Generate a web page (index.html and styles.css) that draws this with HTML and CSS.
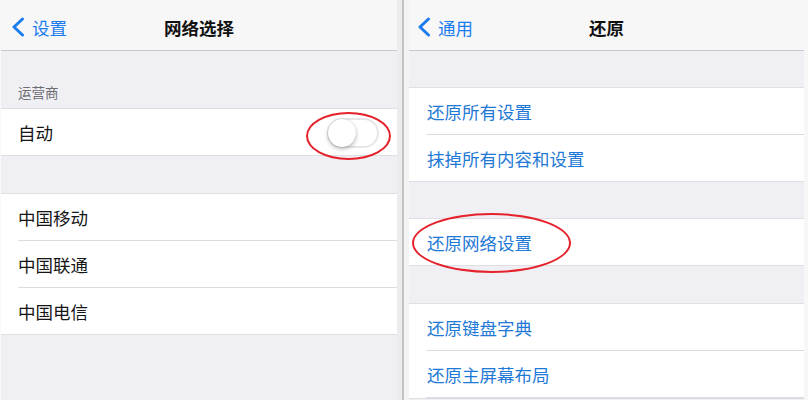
FILE: index.html
```html
<!DOCTYPE html>
<html lang="zh">
<head>
<meta charset="utf-8">
<link rel="stylesheet" href="styles.css">
</head>
<body>
<div class="screen">
  <section class="panel left">
    <header class="nav">
      <div class="back">
        <svg class="chev" width="14" height="20" viewBox="0 0 14 20"><polyline points="11.5,2 3,10 11.5,18" fill="none" stroke="#1b7cf0" stroke-width="3" stroke-linecap="round" stroke-linejoin="round"/></svg>
        <span>设置</span>
      </div>
      <div class="title">网络选择</div>
      <div></div>
    </header>
    <div class="sec-head">运营商</div>
    <div class="group">
      <div class="row">
        <span>自动</span>
        <span class="switch"><span class="knob"></span></span>
      </div>
    </div>
    <div class="gap g37"></div>
    <div class="group">
      <div class="row sep">中国移动</div>
      <div class="row sep">中国联通</div>
      <div class="row">中国电信</div>
    </div>
    <span class="ring ring-a"></span>
  </section>
  <div class="divider"></div>
  <section class="panel right">
    <header class="nav">
      <div class="back">
        <svg class="chev" width="14" height="20" viewBox="0 0 14 20"><polyline points="11.5,2 3,10 11.5,18" fill="none" stroke="#1b7cf0" stroke-width="3" stroke-linecap="round" stroke-linejoin="round"/></svg>
        <span>通用</span>
      </div>
      <div class="title">还原</div>
      <div></div>
    </header>
    <div class="gap g36"></div>
    <div class="group">
      <div class="row sep link">还原所有设置</div>
      <div class="row link">抹掉所有内容和设置</div>
    </div>
    <div class="gap g36"></div>
    <div class="group">
      <div class="row link">还原网络设置</div>
    </div>
    <div class="gap g37"></div>
    <div class="group">
      <div class="row sep link">还原键盘字典</div>
      <div class="row sep link">还原主屏幕布局</div>
    </div>
    <span class="ring ring-b"></span>
  </section>
  <div class="edge"></div>
</div>
</body>
</html>
```
FILE: styles.css
```css
* { box-sizing: border-box; }
html, body { margin: 0; padding: 0; }
body {
  width: 808px;
  height: 400px;
  overflow: hidden;
  background: #efeff4;
  font-family: "Noto Sans CJK SC", "Noto Sans", sans-serif;
  color: #151515;
}
.screen {
  display: flex;
  height: 400px;
}
.panel {
  position: relative;
  background: #efeff4;
  height: 400px;
  overflow: hidden;
}
.left { width: 397px; border-left: 1px solid #f8f8fa; }
.right { width: 395px; }
.divider {
  width: 12px;
  background: linear-gradient(to right, #ececee 0 5px, #c4c4c6 5px 7px, #f3f3f4 7px);
}
.edge { width: 4px; background: #f7f7f7; }

.nav {
  height: 51px;
  background: #f7f7f8;
  border-bottom: 1px solid #c9c9cd;
  display: grid;
  grid-template-columns: 1fr auto 1fr;
  align-items: center;
  padding-top: 4px;
}
.back {
  display: flex;
  align-items: center;
  gap: 7px;
  padding-left: 10px;
  color: #1b7cf0;
  font-size: 17.5px;
}
.right .back { padding-left: 8px; }
.chev { display: block; }
.title {
  font-size: 17.5px;
  font-weight: 700;
  color: #111;
}

.sec-head {
  height: 57px;
  display: flex;
  align-items: flex-end;
  padding: 0 0 6px 17px;
  font-size: 13.5px;
  color: #6d6d72;
}
.gap.g36 { height: 36px; }
.gap.g37 { height: 37px; }

.group {
  background: #fff;
  border-top: 1px solid #dfdfe3;
  border-bottom: 1px solid #dfdfe3;
}
.row {
  position: relative;
  height: 46px;
  display: flex;
  align-items: center;
  justify-content: space-between;
  padding: 0 18px 0 17px;
  font-size: 17.5px;
  color: #151515;
}
.right .row { padding-left: 18px; }
.row.sep { height: 47px; }
.row.sep::after {
  content: "";
  position: absolute;
  left: 17px;
  right: 0;
  bottom: 0;
  height: 1px;
  background: #dcdce0;
}
.link { color: #1f79d6; }

.switch {
  width: 52px;
  height: 30px;
  border-radius: 15px;
  border: 2px solid #e6e6e9;
  background: #fff;
  position: relative;
  display: block;
  margin-top: 2px;
}
.knob {
  position: absolute;
  left: -1px;
  top: -1px;
  width: 28px;
  height: 28px;
  border-radius: 50%;
  background: #fff;
  box-shadow: 0 2px 4px rgba(0,0,0,0.28), 0 0 1px rgba(0,0,0,0.2);
}

.ring {
  position: absolute;
  border: 2px solid #e5222b;
  border-radius: 50%;
  pointer-events: none;
}
.ring-a { left: 305px; top: 112px; width: 85px; height: 48px; }
.ring-b { left: 3px; top: 213px; width: 159px; height: 60px; }
```
